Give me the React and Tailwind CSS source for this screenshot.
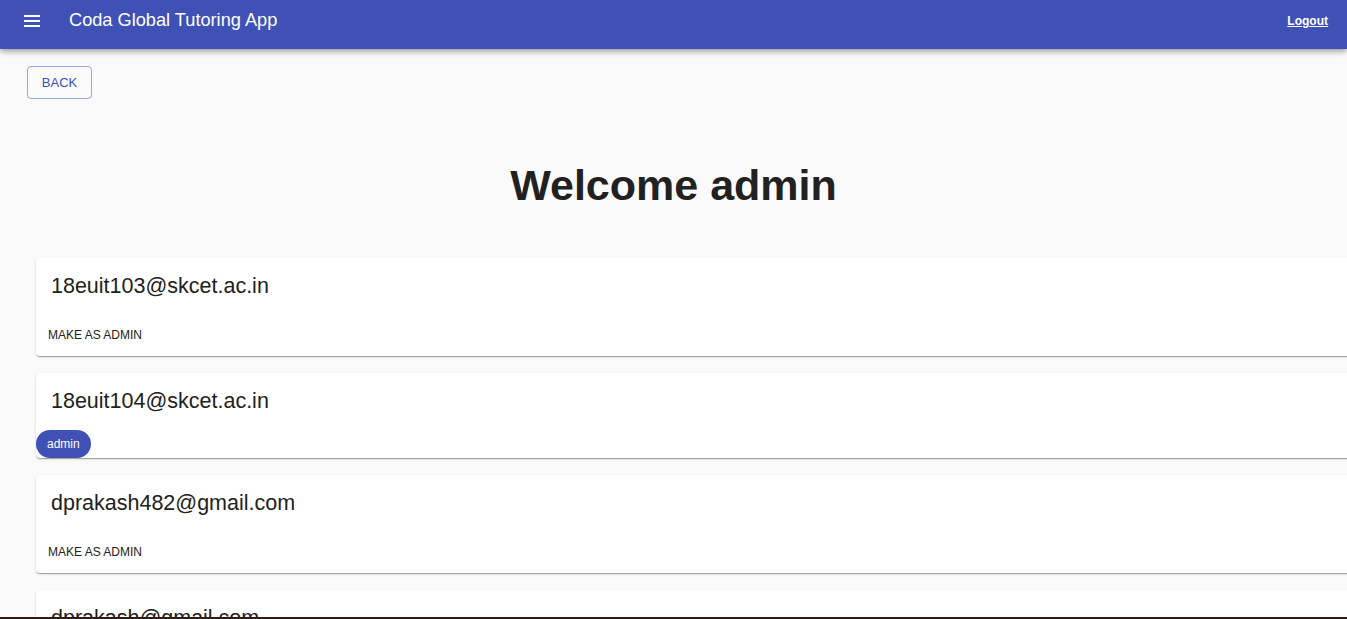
const users = [
  { email: "18euit103@skcet.ac.in", admin: false },
  { email: "18euit104@skcet.ac.in", admin: true },
  { email: "dprakash482@gmail.com", admin: false },
  { email: "dprakash@gmail.com", admin: false },
];

const paperShadow =
  "shadow-[0px_2px_1px_-1px_rgba(0,0,0,0.2),0px_1px_1px_0px_rgba(0,0,0,0.14),0px_1px_3px_0px_rgba(0,0,0,0.12)]";

function MenuIcon() {
  return (
    <svg width="16" height="12" viewBox="0 0 16 12" aria-hidden="true">
      <rect x="0" y="0" width="16" height="2" fill="white" />
      <rect x="0" y="5" width="16" height="2" fill="white" />
      <rect x="0" y="10" width="16" height="2" fill="white" />
    </svg>
  );
}

function UserCard({ email, admin }) {
  return (
    <div className={`ml-[36px] w-full bg-white rounded-[4px] ${paperShadow}`}>
      <div className="pt-[14px] pl-[15px] text-[21.5px] leading-[28px] text-[#212121]">{email}</div>
      {admin ? (
        <div className="mt-[15px] flex">
          <span className="h-[28px] px-[11px] rounded-full bg-[#3f51b5] text-white text-[12px] flex items-center">
            admin
          </span>
        </div>
      ) : (
        <div className="mt-[20px] h-[36px] flex items-start">
          <button className="h-[30px] px-[12px] text-[12px] uppercase text-[#212121] flex items-center">
            Make as admin
          </button>
        </div>
      )}
    </div>
  );
}

export default function App() {
  return (
    <div className="min-h-screen bg-[#fafafa] overflow-hidden font-['Liberation_Sans',Arial,sans-serif]">
      <header className="h-[49px] pt-[1px] pb-[8px] bg-[#3f51b5] text-white shadow-[0px_2px_4px_-1px_rgba(0,0,0,0.2),0px_4px_5px_0px_rgba(0,0,0,0.14),0px_1px_10px_0px_rgba(0,0,0,0.12)] relative z-10">
        <div className="h-[40px] flex items-center pl-[24px] pr-[19px]">
          <MenuIcon />
          <h1 className="ml-[29px] text-[18.2px]">Coda Global Tutoring App</h1>
          <a href="#" className="ml-auto text-[12px] font-bold underline">
            Logout
          </a>
        </div>
      </header>

      <div className="pt-[17px] pl-[27px]">
        <button className="h-[33px] w-[65px] border border-[rgba(63,81,181,0.5)] rounded-[4px] text-[13px] text-[#3f51b5]">
          BACK
        </button>
      </div>

      <h2 className="mt-[60px] text-center text-[43px] leading-[52px] font-bold text-[#212121]">Welcome admin</h2>

      <div className="mt-[47px] flex flex-col gap-[17px] pb-[40px]">
        {users.map((u) => (
          <UserCard key={u.email} {...u} />
        ))}
      </div>

      <div className="fixed bottom-0 left-0 right-0 h-[2px] bg-[#2e1d17]" />
    </div>
  );
}
